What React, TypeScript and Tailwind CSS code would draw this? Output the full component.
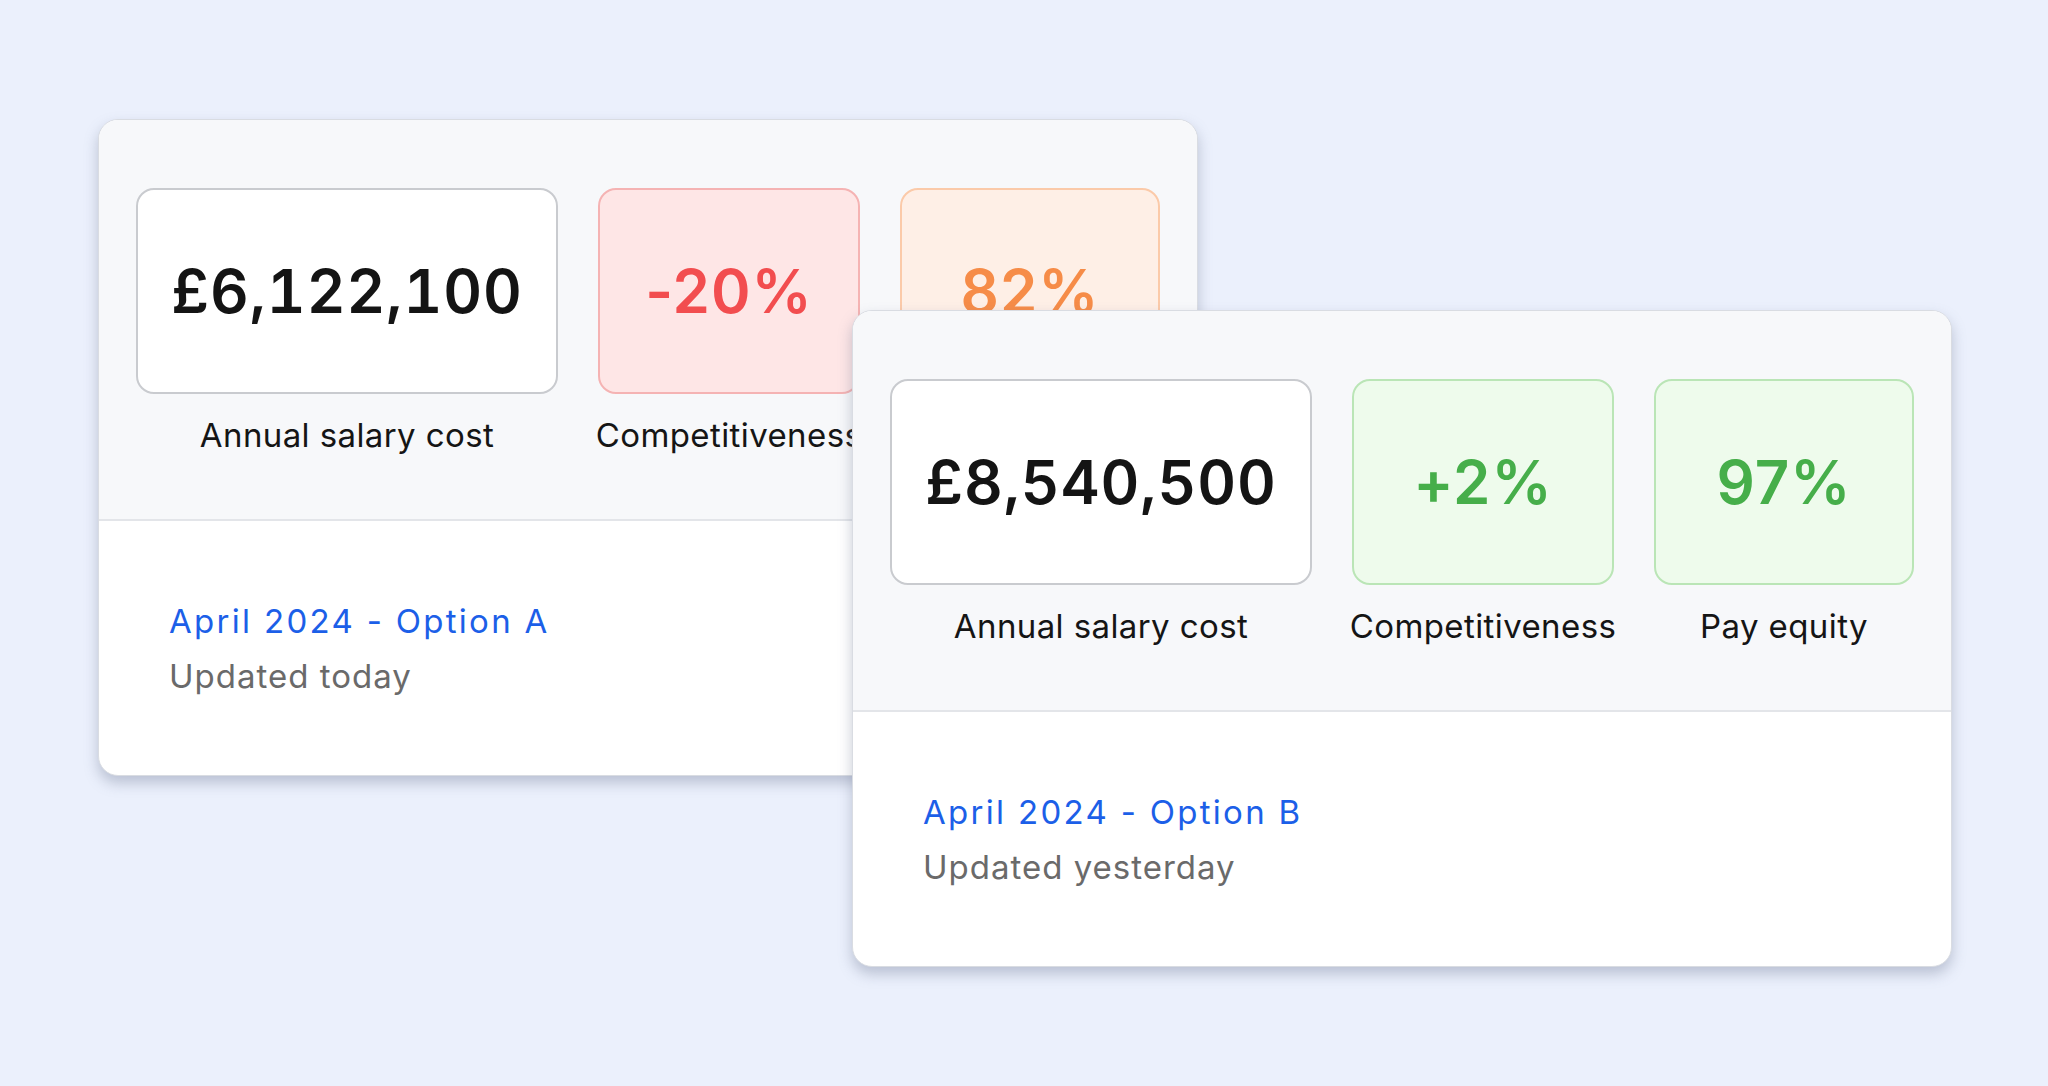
type Metric = {
  value: string
  label: string
  width: string
  tone: 'plain' | 'red' | 'orange' | 'green'
}

type Scenario = {
  title: string
  updated: string
  metrics: Metric[]
}

const toneClasses: Record<Metric['tone'], string> = {
  plain: 'border-[#c9cbcf] bg-white text-[#141414] tabular-nums',
  red: 'border-[#f5b3b3] bg-[#fee6e6] text-[#f24d4f]',
  orange: 'border-[#fbcaa9] bg-[#feefe6] text-[#f68c48]',
  green: 'border-[#bae5b6] bg-[#eefbec] text-[#46ae4a]',
}

const optionA: Scenario = {
  title: 'April 2024 - Option A',
  updated: 'Updated today',
  metrics: [
    { value: '£6,122,100', label: 'Annual salary cost', width: 'w-[422px]', tone: 'plain' },
    { value: '-20%', label: 'Competitiveness', width: 'w-[262px]', tone: 'red' },
    { value: '82%', label: 'Pay equity', width: 'w-[260px]', tone: 'orange' },
  ],
}

const optionB: Scenario = {
  title: 'April 2024 - Option B',
  updated: 'Updated yesterday',
  metrics: [
    { value: '£8,540,500', label: 'Annual salary cost', width: 'w-[422px]', tone: 'plain' },
    { value: '+2%', label: 'Competitiveness', width: 'w-[262px]', tone: 'green' },
    { value: '97%', label: 'Pay equity', width: 'w-[260px]', tone: 'green' },
  ],
}

function MetricTile({ metric }: { metric: Metric }) {
  return (
    <div className={`flex shrink-0 flex-col items-center ${metric.width}`}>
      <div
        className={`flex h-[206px] w-full items-center justify-center rounded-[18px] border-2 ${toneClasses[metric.tone]}`}
      >
        <span className="text-[60px] font-semibold leading-none tracking-[1px]">{metric.value}</span>
      </div>
      <span className="mt-[23px] whitespace-nowrap text-[33px] leading-[36px] tracking-[0.4px] text-[#151515]">
        {metric.label}
      </span>
    </div>
  )
}

function ScenarioCard({ scenario }: { scenario: Scenario }) {
  return (
    <div className="flex h-[657px] w-[1100px] flex-col overflow-hidden rounded-[20px] border border-[#d9dce2] bg-white shadow-[0_7px_14px_rgba(105,115,145,0.38)]">
      <div className="flex h-[401px] shrink-0 gap-[40px] border-b-2 border-[#e3e5e9] bg-[#f7f8fa] px-[37px] pt-[68px]">
        {scenario.metrics.map((metric) => (
          <MetricTile key={metric.label} metric={metric} />
        ))}
      </div>
      <div className="flex flex-1 flex-col px-[70px] pt-[73px]">
        <span className="text-[33px] leading-[55px] tracking-[2.3px] text-[#1c5fe8]">{scenario.title}</span>
        <span className="text-[33px] leading-[55px] tracking-[1px] text-[#6a6a6a]">{scenario.updated}</span>
      </div>
    </div>
  )
}

export default function App() {
  return (
    <div
      className="h-[1086px] w-[2048px] overflow-hidden bg-[#ebf0fc]"
      style={{ fontFamily: 'Inter, "Noto Sans", sans-serif' }}
    >
      <div className="relative pl-[98px] pt-[119px]">
        <ScenarioCard scenario={optionA} />
        <div className="absolute left-[852px] top-[310px]">
          <ScenarioCard scenario={optionB} />
        </div>
      </div>
    </div>
  )
}
